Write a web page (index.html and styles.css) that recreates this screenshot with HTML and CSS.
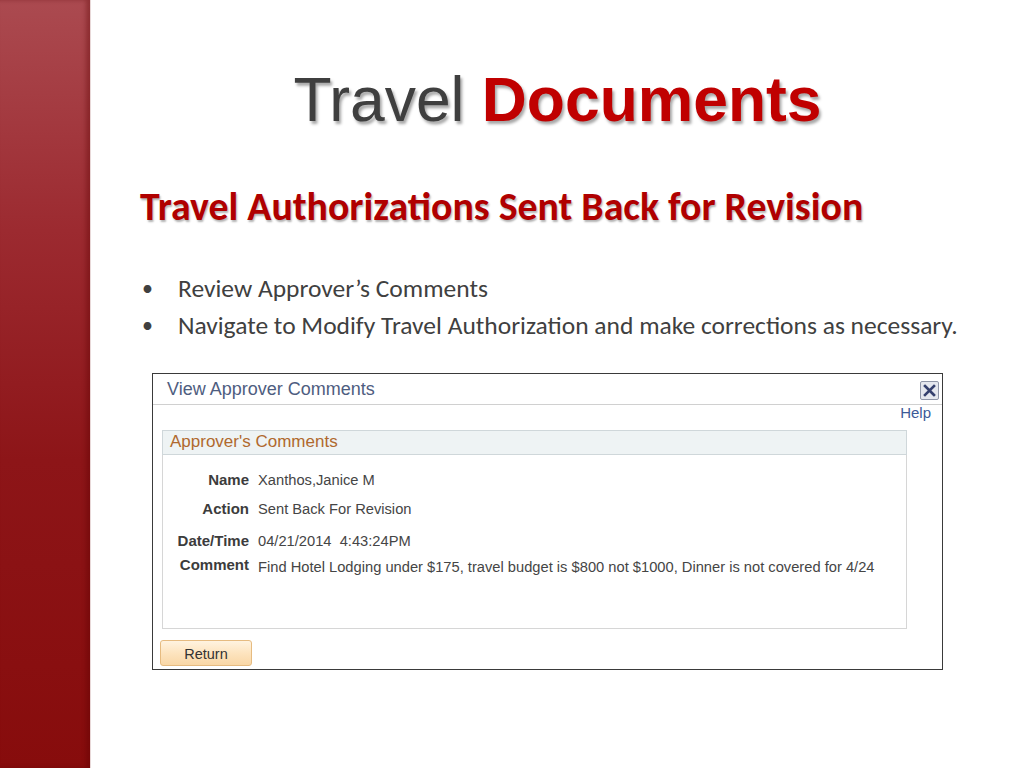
FILE: index.html
```html
<!DOCTYPE html>
<html>
<head>
<meta charset="utf-8">
<link rel="stylesheet" href="styles.css">
</head>
<body>
<div class="slide">
  <div class="sidebar"></div>
  <div class="main">
    <h1 class="title"><span class="t-gray">Travel</span> <span class="t-red">Documents</span></h1>
    <h2 class="subtitle">Travel Authorizations Sent Back for Revision</h2>
    <ul class="bullets">
      <li>Review Approver’s Comments</li>
      <li>Navigate to Modify Travel Authorization and make corrections as necessary.</li>
    </ul>
    <div class="dialog">
      <div class="dlg-head">
        <span class="dlg-title">View Approver Comments</span>
        <span class="dlg-close">
          <svg width="19" height="19" viewBox="0 0 19 19">
            <rect x="0.5" y="0.5" width="18" height="18" rx="1.5" fill="#e4e7ee" stroke="#8f96a8"/>
            <path d="M5 5 L14 14 M14 5 L5 14" stroke="#34406e" stroke-width="2.6" stroke-linecap="square"/>
          </svg>
        </span>
      </div>
      <div class="help-row"><span class="help">Help</span></div>
      <div class="group">
        <div class="group-head">Approver's Comments</div>
        <div class="group-body">
          <div class="row r-name"><span class="lbl">Name</span><span class="val">Xanthos,Janice M</span></div>
          <div class="row r-action"><span class="lbl">Action</span><span class="val">Sent Back For Revision</span></div>
          <div class="row r-date"><span class="lbl">Date/Time</span><span class="val">04/21/2014&nbsp; 4:43:24PM</span></div>
          <div class="row r-comment"><span class="lbl">Comment</span><span class="val">Find Hotel Lodging under $175, travel budget is $800 not $1000, Dinner is not covered for 4/24</span></div>
        </div>
      </div>
      <div class="btn-row"><span class="btn">Return</span></div>
    </div>
  </div>
</div>
</body>
</html>
```

FILE: styles.css
```css
html, body {
  margin: 0;
  padding: 0;
  background: #ffffff;
}
.slide {
  width: 1024px;
  height: 768px;
  display: flex;
  overflow: hidden;
}
.sidebar {
  width: 90px;
  flex: 0 0 90px;
  height: 768px;
  background: linear-gradient(to bottom, #ab4a50 0%, #9c2a30 30%, #8d1518 60%, #870c0c 100%);
  box-shadow: inset -4px 0 4px rgba(90, 0, 0, 0.35);
  border-right: 1px solid #e8d8d8;
}
.main {
  flex: 1;
  display: flex;
  flex-direction: column;
}
.title {
  margin: 64px 0 0 0;
  height: 72px;
  font-family: "Liberation Sans", Arial, sans-serif;
  font-size: 62.4px;
  line-height: 72px;
  font-weight: normal;
  text-align: center;
  text-shadow: 2px 3px 3px rgba(0, 0, 0, 0.35);
}
.t-gray { color: #3f3f3f; }
.t-red { color: #c00000; font-weight: bold; }
.subtitle {
  margin: 47px 0 0 49px;
  font-family: Carlito, "Liberation Sans Narrow", Lato, sans-serif;
  font-size: 39.8px;
  line-height: 48px;
  font-weight: bold;
  color: #b00000;
  text-shadow: 1px 2px 2px rgba(0, 0, 0, 0.3);
}
.bullets {
  margin: 39px 0 0 49px;
  padding: 0;
  list-style: none;
  font-family: Carlito, Lato, sans-serif;
  font-size: 25.5px;
  line-height: 37px;
  color: #404040;
}
.bullets li {
  position: relative;
  padding-left: 38px;
}
.bullets li::before {
  content: "•";
  position: absolute;
  left: 2px;
  top: 0;
  font-size: 22px;
}
.dialog {
  margin: 29px 0 0 61px;
  width: 789px;
  height: 295px;
  border: 1px solid #3a3a3a;
  background: #fff;
  font-family: "Liberation Sans", Arial, sans-serif;
  display: flex;
  flex-direction: column;
}
.dlg-head {
  height: 30px;
  border-bottom: 1px solid #d0d0d0;
  display: flex;
  align-items: center;
  justify-content: space-between;
  padding: 0 3px 0 14px;
}
.dlg-title {
  font-size: 18px;
  color: #4e5d80;
}
.dlg-close {
  display: flex;
  margin-top: 2px;
}
.help-row {
  display: flex;
  justify-content: flex-end;
  padding: 0 11px 0 0;
  height: 24px;
  line-height: 15px;
}
.help {
  font-size: 15px;
  color: #3c5a98;
}
.group {
  margin: 1px 0 0 9px;
  width: 745px;
  height: 199px;
  display: flex;
  flex-direction: column;
  box-sizing: border-box;
}
.group-head {
  height: 25px;
  box-sizing: border-box;
  border: 1px solid #cfd7da;
  background: #eef3f4;
  font-size: 17px;
  line-height: 22px;
  color: #b0692e;
  padding-left: 7px;
}
.group-body {
  flex: 1;
  border: 1px solid #d6d6d6;
  border-top: none;
  padding-top: 16px;
}
.row {
  display: flex;
  align-items: baseline;
  font-size: 14px;
  line-height: 17px;
}
.lbl {
  width: 86px;
  flex: 0 0 86px;
  text-align: right;
  font-weight: bold;
  color: #3c3c3c;
  font-size: 15px;
}
.val {
  margin-left: 9px;
  color: #454545;
  font-size: 14.7px;
}
.r-action { margin-top: 11px; }
.r-date { margin-top: 14px; }
.r-comment { margin-top: 8px; }
.r-comment .lbl { position: relative; top: -2px; }
.btn-row {
  padding: 11px 0 0 7px;
}
.btn {
  display: inline-block;
  width: 90px;
  height: 24px;
  line-height: 26px;
  text-align: center;
  font-size: 14.5px;
  color: #333;
  border: 1px solid #e6bb80;
  border-radius: 3px;
  background: linear-gradient(to bottom, #fff3e0 0%, #fde4bf 50%, #f9d7a6 100%);
}
```
